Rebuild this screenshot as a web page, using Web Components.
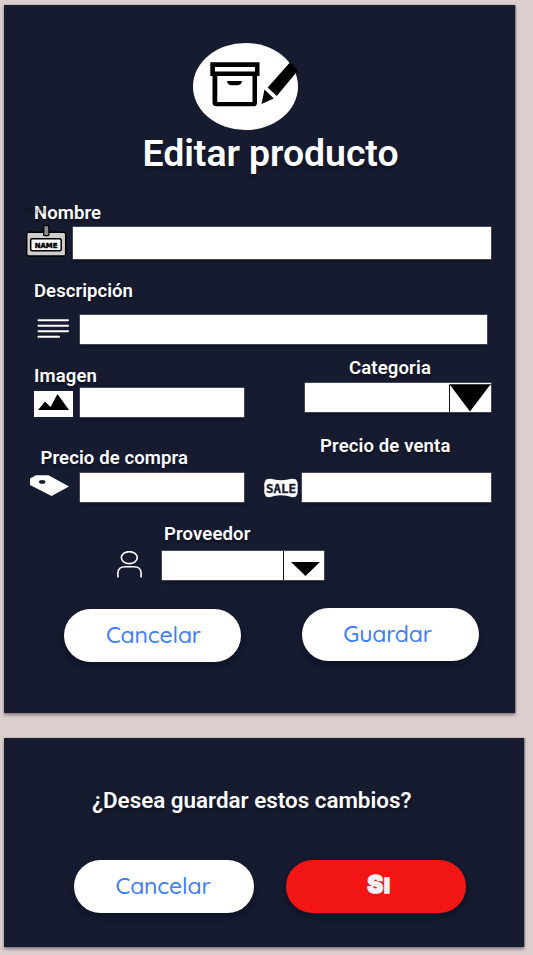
<!DOCTYPE html>
<html lang="es">
<head>
<meta charset="utf-8">
<title>Editar producto</title>
<style>
html,body{margin:0;height:955px;overflow:hidden;background:#dacece}
body{font-family:Roboto,sans-serif;color:#fff}
</style>
</head>
<body>
<product-page></product-page>
<script>
const define = (name, html, after) => customElements.define(name, class extends HTMLElement {
  connectedCallback() {
    if (!this.shadowRoot) this.attachShadow({mode: 'open'}).innerHTML = html;
    if (after) after(this);
  }
});

/* Text line whose letter spacing is adjusted to fill the width given in "w". */
define('fit-text', `<style>
  :host{display:block;white-space:nowrap}
  span{display:inline-block}
</style><span><slot></slot></span>`, el => {
  const span = el.shadowRoot.querySelector('span');
  const target = +el.getAttribute('w');
  const n = el.textContent.length;
  if (target) span.style.letterSpacing = (target - span.getBoundingClientRect().width) / n + 'px';
});

define('app-panel', `<style>
  :host{display:flex;flex-direction:column;box-sizing:border-box;background:#171b30;
    box-shadow:0 2px 3px rgba(60,40,50,.5),1px 0 1px rgba(60,40,60,.35)}
</style><slot></slot>`);

define('form-field', `<style>
  :host{display:flex;flex-direction:column;gap:var(--gap,3px)}
  ::slotted(fit-text){font-weight:600;font-size:18.5px;line-height:20px;margin-left:var(--lx,0);
    text-shadow:0 2px 2px rgba(0,0,0,.35)}
  .row{display:flex;align-items:flex-start}
</style><slot name="label"></slot><div class="row"><slot name="icon"></slot><slot></slot></div>`);

define('text-box', `<style>
  :host{display:flex;justify-content:flex-end;box-sizing:border-box;background:#fff;
    width:var(--w);height:var(--h,29px);
    box-shadow:0 0 0 .5px rgba(160,160,175,.7),0 3px 3px rgba(0,0,0,.3)}
</style><slot></slot>`);

define('pill-button', `<style>
  :host{display:flex;align-items:center;justify-content:center;box-sizing:border-box;
    width:var(--w,177px);height:53px;border-radius:26.5px;background:var(--bg,#fff);color:#3b7df6;
    padding-bottom:2px;
    font:500 23px/28px Quicksand,Lato,sans-serif;box-shadow:0 4px 8px rgba(0,5,20,.4)}
</style><slot></slot>`);

define('yes-label', `<style>
  :host{display:block;color:#f2f2f2;font:900 20.5px/28px Inter,sans-serif;letter-spacing:.8px;
    -webkit-text-stroke:1.3px #f2f2f2}
  :host::first-letter{font-size:24px}
</style><slot></slot>`);

define('product-page', `<style>
  :host{display:flex;flex-direction:column;align-items:flex-start;gap:25px;padding:5px 0 0 4px}
  svg{display:block;flex:none}
  .edit{width:511px;height:708px;position:relative}
  .confirm{width:519.5px;height:209px}
  .logo{margin:38px 0 0 189px}
  h1,h2{margin:0;text-shadow:0 3px 3px rgba(0,0,0,.35)}
  h1{font-size:37.4px;line-height:44px;font-weight:600;padding:1px 0 0 138.5px;margin-bottom:-1px}
  h2{font-size:22.4px;line-height:26px;font-weight:600;padding:49px 0 0 88px}
  .pair{display:flex;align-items:flex-start}
  .ghost{position:absolute;left:20px;top:199px;font-size:10px;line-height:14px;color:rgba(0,0,0,.35)}
  .badge{font:bold 7px "DejaVu Sans",sans-serif;stroke:#000;stroke-width:.5px}
  .sale{font:bold 12.500px "DejaVu Sans Mono",monospace;stroke:#171b30;stroke-width:.4px}
</style>
<app-panel class="edit">
  <span class="ghost">open</span>
  <svg class="logo" width="108" height="87" viewBox="193 43 108 87">
    <ellipse cx="245.5" cy="86.5" rx="52.5" ry="43.5" fill="#fff"/>
    <path d="M210.3 62.3H259.5V76H257V102.5Q257 106.3 253.3 106.3H216.2Q212.5 106.3 212.5 102.5V76H210.3Z"/>
    <path d="M215 67H255V71.5H215ZM217.300 76H252.500V102H217.300Z" fill="#fff"/>
    <path d="M227 81H242Q241.500 85.300 237 85.300H232Q227.500 85.300 227 81ZM290.300 62L298 70.500L276.700 96L267.700 87.500ZM264.500 89.500L273.700 98.500L261.500 104Z"/>
  </svg>
  <h1><fit-text w="256">Editar producto</fit-text></h1>

  <form-field style="margin:29px 0 0 22px;--lx:8px;--gap:2px">
    <fit-text slot="label" w="67">Nombre</fit-text>
    <svg slot="icon" width="41" height="33" viewBox="26 224 41 33">
      <rect x="26.700" y="231.300" width="39" height="23.700" rx="2" fill="#cdcdc9" stroke="#000" stroke-width="1.500"/>
      <rect x="30.700" y="237.700" width="30.500" height="12" rx="1.500" fill="#fff" stroke="#000" stroke-width="1.500"/>
      <rect x="43.700" y="224.700" width="5.200" height="10" rx="1" fill="#8d8d8d" stroke="#000" stroke-width="1.300"/>
      <text class="badge" x="34.700" y="246.500" textLength="22.700" lengthAdjust="spacingAndGlyphs">NAME</text>
    </svg>
    <text-box style="--w:418.200px;--h:32px;margin:2px 0 0 6px"></text-box>
  </form-field>

  <form-field style="margin:22px 0 0 30px;--gap:13.500px">
    <fit-text slot="label" w="99">Descripción</fit-text>
    <svg slot="icon" width="39" height="29" viewBox="34 315 39 29" fill="none" stroke="#fff" stroke-width="2" stroke-linecap="round">
      <path d="M38.500 320.200H68M38.500 325.700H68M38.500 331.200H68M38.500 336.700H59"/>
    </svg>
    <text-box style="--w:407.200px;--h:29px;margin:0 0 0 7px"></text-box>
  </form-field>

  <div class="pair" style="margin-top:14.500px;height:82px">
    <form-field style="margin:8px 0 0 30px;--gap:2px">
      <fit-text slot="label" w="63">Imagen</fit-text>
      <svg slot="icon" width="39" height="26" viewBox="34 391 39 26" style="margin-top:3px">
        <path d="M34 391H73V417H34Z" fill="#fff"/>
        <path d="M38 410L45 401.500L50.500 407L57.500 394L69 410Z"/>
      </svg>
      <text-box style="--w:163.500px;margin-left:7px"></text-box>
    </form-field>
    <form-field style="margin-left:61.500px;--gap:5px;--lx:44px">
      <fit-text slot="label" w="82">Categoria</fit-text>
      <text-box style="--w:186px">
        <svg width="42" height="29" viewBox="0 0 42 29"><path d="M.5 29V1.700H42" fill="none" stroke="#111"/><path d="M1 2H41L21 28.500Z"/></svg>
      </text-box>
    </form-field>
  </div>

  <div class="pair" style="margin-top:-4px;height:87.500px">
    <form-field style="margin:12px 0 0 26px;--gap:5px;--lx:10.500px">
      <fit-text slot="label" w="147.500">Precio de compra</fit-text>
      <svg slot="icon" width="40" height="24" viewBox="30 473 40 24">
        <path fill="#fff" fill-rule="evenodd" d="M30 478.500L36 475.300H48.500L69 486.500L51.500 496L30 485ZM39 481.900A3.200 1.900 0 1 0 45.400 481.900A3.200 1.900 0 1 0 39 481.900Z"/>
      </svg>
      <text-box style="--w:163.500px;margin-left:10px"></text-box>
    </form-field>
    <form-field style="margin-left:20.500px;--gap:16.500px;--lx:56px">
      <fit-text slot="label" w="130.500">Precio de venta</fit-text>
      <svg slot="icon" width="34" height="20" viewBox="264 477.500 34 20" style="margin-top:5px">
        <path d="M266 479Q270 477.500 274 479Q281 480.500 288 479Q292 477.500 296 479Q298.500 482 297.500 487.500Q298.500 493 296 496Q292 497.500 288 495.500Q281 494 274 495.500Q270 497.500 266 496Q263.500 493 264.500 487.500Q263.500 482 266 479Z" fill="#fff"/>
        <text class="sale" x="266" y="492" textLength="30" lengthAdjust="spacingAndGlyphs" fill="#171b30">SALE</text>
      </svg>
      <text-box style="--w:188.500px;margin-left:4px"></text-box>
    </form-field>
  </div>

  <form-field style="margin:0 0 0 113px;--gap:7.500px;--lx:47px">
    <fit-text slot="label" w="86.500">Proveedor</fit-text>
    <svg slot="icon" width="25" height="28" viewBox="117 551 25 28" fill="none" stroke="#fff" stroke-width="1.600">
      <ellipse cx="129.300" cy="557.600" rx="8" ry="6"/><path d="M117.900 577.500V573Q118.300 566.800 125 566.800H134Q140.700 566.800 141.100 573V577.500"/>
    </svg>
    <text-box style="--w:162px;margin-left:20px">
      <svg width="41" height="29" viewBox="0 0 41 29"><path d="M.5 0V29" stroke="#111"/><path d="M8 11H37L22.500 25Z"/></svg>
    </text-box>
  </form-field>

  <div class="pair" style="padding:28.200px 0 0 60.400px;gap:60.200px">
    <pill-button style="margin-top:1.300px"><fit-text w="95" style="margin-left:1px">Cancelar</fit-text></pill-button>
    <pill-button><fit-text w="88.500" style="margin-right:5px">Guardar</fit-text></pill-button>
  </div>
</app-panel>

<app-panel class="confirm">
  <h2><fit-text w="319.500">¿Desea guardar estos cambios?</fit-text></h2>
  <div class="pair" style="padding:47px 0 0 70px;gap:31.600px">
    <pill-button style="--w:180px"><fit-text w="95" style="margin-right:2px">Cancelar</fit-text></pill-button>
    <pill-button style="--w:180px;--bg:#f11515"><yes-label style="margin-left:7px">SI</yes-label></pill-button>
  </div>
</app-panel>`);
</script>
</body>
</html>
